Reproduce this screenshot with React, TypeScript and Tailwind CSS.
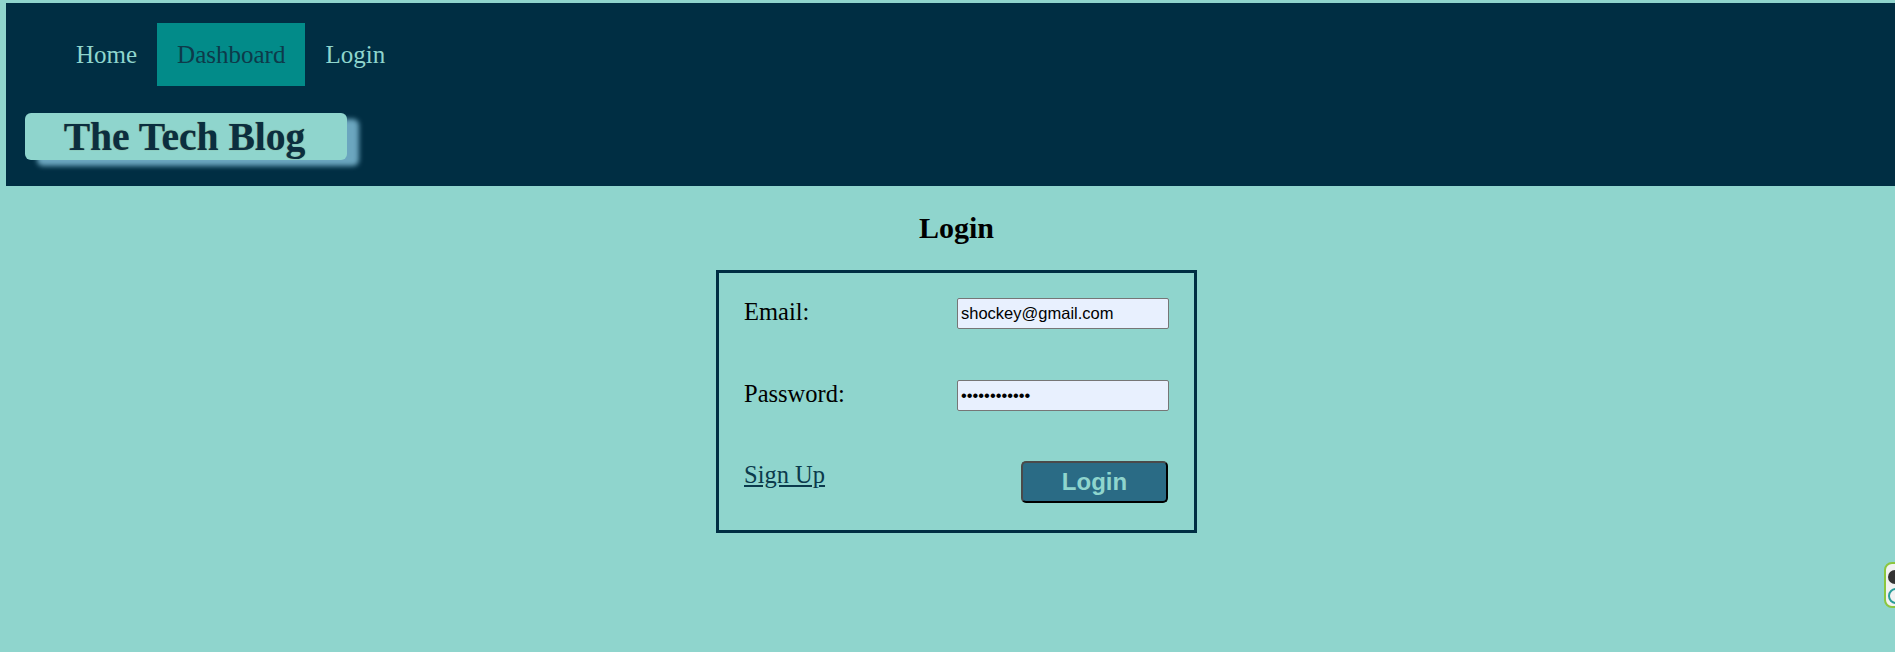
import * as React from 'react';

const serif = { fontFamily: '"Liberation Serif", "Times New Roman", serif' };
const sans = { fontFamily: '"Liberation Sans", Arial, sans-serif' };

// 导航链接
const NavLink: React.FC<{ label: string; active?: boolean }> = ({ label, active }) => (
  <a
    href="#"
    className={
      active
        ? 'flex h-full items-center px-[20px] text-[25px] bg-[#028b89] text-[#0d3a4a]'
        : 'flex h-full items-center px-[20px] text-[25px] text-[#8fd5cd]'
    }
  >
    {label}
  </a>
);

export default function App() {
  const [email, setEmail] = React.useState('shockey@gmail.com');
  const [password, setPassword] = React.useState('password1234');

  return (
    <div className="relative min-h-[652px] w-full overflow-hidden bg-[#8fd5cd]" style={serif}>
      {/* 页头 */}
      <header className="ml-[6px] mt-[3px] h-[183px] bg-[#002e43] pl-[19px] pt-[20px]">
        <nav className="flex h-[63px] pl-[31px]">
          <NavLink label="Home" />
          <NavLink label="Dashboard" active />
          <NavLink label="Login" />
        </nav>
        <div className="mt-[27px] flex h-[47px] w-[322px] items-center justify-center rounded-[6px] bg-[#8fd5cd] pr-[3px] pt-[2px] shadow-[12px_6px_5px_#6ba6bf]">
          <h1 className="text-[39.5px] font-bold leading-none text-[#0b2e40] [text-shadow:0_0_1px_#6f7a45]">
            The Tech Blog
          </h1>
        </div>
      </header>

      {/* 登录表单 */}
      <main className="flex flex-col items-center pl-[18px] pt-[25px]">
        <h2 className="text-[30px] font-bold leading-[1.15] text-black">Login</h2>
        <form
          className="mt-[24px] flex w-[481px] flex-col border-[3px] border-[#002e43] px-[25px] pb-[27px] pt-[25px]"
          onSubmit={(e) => e.preventDefault()}
        >
          <div className="flex items-start justify-between">
            <label className="text-[24.5px] leading-[1.15] text-black">Email:</label>
            <input
              type="email"
              value={email}
              onChange={(e) => setEmail(e.target.value)}
              className="h-[31px] w-[212px] rounded-[2px] border border-[#767676] bg-[#e8f0fe] px-[3px] text-[16.5px] text-black outline-none"
              style={sans}
            />
          </div>
          <div className="mt-[51px] flex items-start justify-between">
            <label className="text-[24.5px] leading-[1.15] text-black">Password:</label>
            <input
              type="password"
              value={password}
              onChange={(e) => setPassword(e.target.value)}
              className="h-[31px] w-[212px] rounded-[2px] border border-[#767676] bg-[#e8f0fe] px-[3px] text-[16.5px] text-black outline-none"
              style={sans}
            />
          </div>
          <div className="mt-[50px] flex items-start justify-between">
            <a href="#" className="text-[24.5px] leading-[1.15] text-[#0b3a4c] underline">
              Sign Up
            </a>
            <button
              type="submit"
              className="mr-[1px] h-[42px] w-[147px] rounded-[5px] border-2 border-[#4a4a4a] border-b-black border-r-black bg-[#2a6b85] text-[24px] font-bold text-[#8fd5cd]"
              style={sans}
            >
              Login
            </button>
          </div>
        </form>
      </main>

      {/* 右侧浮动小部件 */}
      <div className="absolute left-[1884px] top-[562px] h-[46px] w-[40px] rounded-[8px] border-2 border-[#8cc63f] bg-[#f2f2f2]">
        <div className="absolute left-[2px] top-[6px] h-[14px] w-[14px] rounded-full bg-[#333]" />
        <div className="absolute left-[2px] top-[24px] h-[16px] w-[16px] rounded-full border-2 border-[#2a9d9a]" />
      </div>
    </div>
  );
}
